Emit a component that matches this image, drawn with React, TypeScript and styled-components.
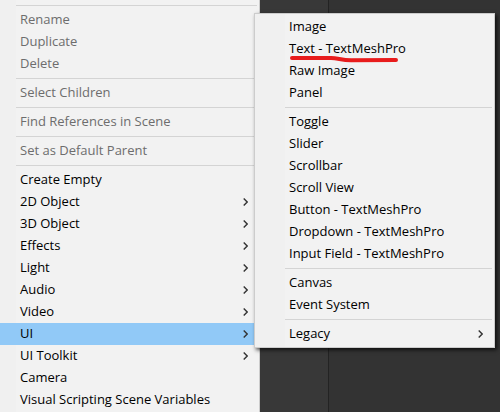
import React from "react";
import styled, { createGlobalStyle } from "styled-components";

const GlobalStyle = createGlobalStyle`
  * { box-sizing: border-box; }
  html, body { margin: 0; height: 100%; overflow: hidden; background: #333333; }
  #root { height: 100%; }
  body { font-family: "Open Sans", "Noto Sans", sans-serif; font-size: 13px; }
`;

const Screen = styled.main`
  position: relative;
  display: flex;
  height: 100vh;
  overflow: hidden;
`;

const Menu = styled.ul<{ $gutter: number }>`
  --gutter: ${(p) => p.$gutter}px;
  margin: 0;
  padding: 2px 0;
  list-style: none;
  border: 0 solid #cccccc;
  background: linear-gradient(to right, #f0f0f0 var(--gutter), #f2f2f2 var(--gutter));
  box-shadow: 2px 2px 4px rgba(0, 0, 0, 0.7);
`;

const ContextMenu = styled(Menu)`
  flex: 0 0 52%;
  height: 100%;
  border-right-width: 1px;
`;

const SubMenu = styled(Menu)`
  position: absolute;
  top: 13px;
  left: calc(52% - 6px);
  right: 5px;
  border-width: 1px;
`;

const SidePane = styled.div`
  flex: 0 0 69px;
  border-right: 1px solid #232323;
  background: #383838;
`;

const Separator = styled.li`
  height: 7px;
  padding: 3px 2px 3px var(--gutter);

  &::before {
    content: "";
    display: block;
    height: 1px;
    background: #d4d4d4;
  }
`;

const ItemButton = styled.button<{ $active?: boolean }>`
  display: flex;
  align-items: center;
  justify-content: space-between;
  width: 100%;
  height: 22px;
  padding: 0 11px 0 calc(var(--gutter) + 4px);
  border: 0;
  background: ${(p) => (p.$active ? "#91c9f7" : "transparent")};
  color: #000000;
  font: inherit;
  line-height: 20px;
  text-align: left;
  white-space: nowrap;

  &:disabled { color: #6d6d6d; }
`;

const Label = styled.span`
  position: relative;
  padding-bottom: 2px;
`;

const Stroke = styled.svg`
  position: absolute;
  left: 0;
  top: 16px;
  overflow: visible;
`;

const Chevron = () => (
  <svg width="5" height="8" viewBox="0 0 5 8" fill="none" stroke="#333333" strokeWidth="1.4" aria-hidden="true">
    <path d="M0.7 0.5 L4.2 4 L0.7 7.5" />
  </svg>
);

const RedUnderline = () => (
  <Stroke width="112" height="8" viewBox="0 0 112 8" fill="none" aria-hidden="true">
    <path
      d="M3 4 H42 C49 4 52 6 62 6.2 L107 6"
      stroke="#e81c1c"
      strokeWidth="4"
      strokeLinecap="round"
    />
  </Stroke>
);

type Entry =
  | "separator"
  | { label: string; disabled?: boolean; more?: boolean; active?: boolean; marked?: boolean };

const contextEntries: Entry[] = [
  "separator",
  { label: "Rename", disabled: true },
  { label: "Duplicate", disabled: true },
  { label: "Delete", disabled: true },
  "separator",
  { label: "Select Children", disabled: true },
  "separator",
  { label: "Find References in Scene", disabled: true },
  "separator",
  { label: "Set as Default Parent", disabled: true },
  "separator",
  { label: "Create Empty" },
  { label: "2D Object", more: true },
  { label: "3D Object", more: true },
  { label: "Effects", more: true },
  { label: "Light", more: true },
  { label: "Audio", more: true },
  { label: "Video", more: true },
  { label: "UI", more: true, active: true },
  { label: "UI Toolkit", more: true },
  { label: "Camera" },
  { label: "Visual Scripting Scene Variables" },
];

const uiEntries: Entry[] = [
  { label: "Image" },
  { label: "Text - TextMeshPro", marked: true },
  { label: "Raw Image" },
  { label: "Panel" },
  "separator",
  { label: "Toggle" },
  { label: "Slider" },
  { label: "Scrollbar" },
  { label: "Scroll View" },
  { label: "Button - TextMeshPro" },
  { label: "Dropdown - TextMeshPro" },
  { label: "Input Field - TextMeshPro" },
  "separator",
  { label: "Canvas" },
  { label: "Event System" },
  "separator",
  { label: "Legacy", more: true },
];

const Entries = ({ items }: { items: Entry[] }) => (
  <>
    {items.map((item, i) =>
      item === "separator" ? (
        <Separator key={i} role="separator" />
      ) : (
        <li key={i} role="none">
          <ItemButton
            type="button"
            role="menuitem"
            disabled={item.disabled}
            $active={item.active}
            aria-haspopup={item.more ? "menu" : undefined}
            aria-expanded={item.more ? !!item.active : undefined}
          >
            <Label>
              {item.label}
              {item.marked && <RedUnderline />}
            </Label>
            {item.more && <Chevron />}
          </ItemButton>
        </li>
      )
    )}
  </>
);

export default function App() {
  return (
    <>
      <GlobalStyle />
      <Screen>
        <ContextMenu role="menu" aria-label="Hierarchy" $gutter={16}>
          <Entries items={contextEntries} />
        </ContextMenu>
        <SidePane />
        <SubMenu role="menu" aria-label="UI" $gutter={30}>
          <Entries items={uiEntries} />
        </SubMenu>
      </Screen>
    </>
  );
}
